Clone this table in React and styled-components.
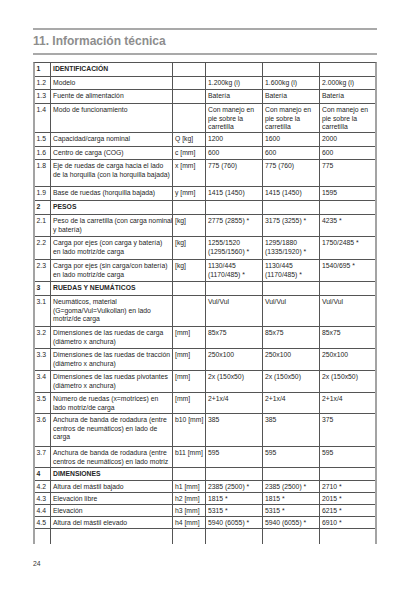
import React from "react";
import styled, { createGlobalStyle } from "styled-components";

const Global = createGlobalStyle`
  html, body { margin: 0; padding: 0; background: #fff; }
  body { font-family: "Liberation Sans", Arial, sans-serif; }
`;

const Page = styled.div`
  padding: 28px 0 0 33px;
  width: 344px;
`;

const Rule = styled.div`
  height: 2px;
  background: #a9a9a9;
  margin-top: ${(p) => p.$mt || 0}px;
`;

const Title = styled.h1`
  margin: 4px 0 0;
  font-size: 12px;
  line-height: 14px;
  font-weight: 700;
  color: #8d8d8d;
`;

const Table = styled.div`
  margin-top: 7px;
  box-sizing: border-box;
  width: 344px;
  border-top: 1px solid #555;
  border-left: 2px solid #a3a3a3;
  border-right: 2px solid #a3a3a3;
`;

const Row = styled.div`
  display: grid;
  grid-template-columns: 16px 122px 33px 57px 57px 55px;
  box-sizing: border-box;
  height: ${(p) => p.$h}px;
  border-bottom: ${(p) => (p.$open ? "none" : "1px solid #555")};
`;

const Cell = styled.div`
  box-sizing: border-box;
  padding: 2px 0 0 ${(p) => (p.$first ? 1.5 : 2)}px;
  border-right: ${(p) => (p.$last ? "none" : "1px solid #555")};
  font-size: 6.8px;
  line-height: 8.5px;
  font-weight: ${(p) => (p.$bold ? 700 : 400)};
  color: #262626;
  white-space: nowrap;
  overflow: hidden;
`;

const PageNumber = styled.div`
  margin-top: 16px;
  font-size: 6.8px;
  line-height: 8px;
  color: #333;
`;

const M = ["Con manejo en", "pie sobre la", "carretilla"];

const rows = [
  { n: "1", l: ["IDENTIFICACIÓN"], bold: true, h: 14 },
  { n: "1.2", l: ["Modelo"], v: ["1.200kg (i)", "1.600kg (i)", "2.000kg (i)"], h: 13 },
  { n: "1.3", l: ["Fuente de alimentación"], v: ["Batería", "Batería", "Batería"], h: 14 },
  { n: "1.4", l: ["Modo de funcionamiento"], v: [M, M, M], h: 29 },
  { n: "1.5", l: ["Capacidad/carga nominal"], u: "Q [kg]", v: ["1200", "1600", "2000"], h: 14 },
  { n: "1.6", l: ["Centro de carga (COG)"], u: "c [mm]", v: ["600", "600", "600"], h: 13 },
  {
    n: "1.8",
    l: ["Eje de ruedas de carga hacia el lado", "de la horquilla (con la horquilla bajada)"],
    u: "x [mm]",
    v: ["775 (760)", "775 (760)", "775"],
    h: 27,
  },
  { n: "1.9", l: ["Base de ruedas (horquilla bajada)"], u: "y [mm]", v: ["1415 (1450)", "1415 (1450)", "1595"], h: 14 },
  { n: "2", l: ["PESOS"], bold: true, h: 14 },
  {
    n: "2.1",
    l: ["Peso de la carretilla (con carga nominal", "y batería)"],
    u: "[kg]",
    v: ["2775 (2855) *", "3175 (3255) *", "4235 *"],
    h: 22,
  },
  {
    n: "2.2",
    l: ["Carga por ejes (con carga y batería)", "en lado motriz/de carga"],
    u: "[kg]",
    v: [["1255/1520", "(1295/1560) *"], ["1295/1880", "(1335/1920) *"], "1750/2485 *"],
    h: 23,
  },
  {
    n: "2.3",
    l: ["Carga por ejes (sin carga/con batería)", "en lado motriz/de carga"],
    u: "[kg]",
    v: [["1130/445", "(1170/485) *"], ["1130/445", "(1170/485) *"], "1540/695 *"],
    h: 22,
  },
  { n: "3", l: ["RUEDAS Y NEUMÁTICOS"], bold: true, h: 14 },
  {
    n: "3.1",
    l: ["Neumáticos, material", "(G=goma/Vul=Vulkollan) en lado", "motriz/de carga"],
    v: ["Vul/Vul", "Vul/Vul", "Vul/Vul"],
    h: 31,
  },
  {
    n: "3.2",
    l: ["Dimensiones de las ruedas de carga", "(diámetro x anchura)"],
    u: "[mm]",
    v: ["85x75", "85x75", "85x75"],
    h: 22,
  },
  {
    n: "3.3",
    l: ["Dimensiones de las ruedas de tracción", "(diámetro x anchura)"],
    u: "[mm]",
    v: ["250x100", "250x100", "250x100"],
    h: 22,
  },
  {
    n: "3.4",
    l: ["Dimensiones de las ruedas pivotantes", "(diámetro x anchura)"],
    u: "[mm]",
    v: ["2x (150x50)", "2x (150x50)", "2x (150x50)"],
    h: 22,
  },
  {
    n: "3.5",
    l: ["Número de ruedas (x=motrices) en", "lado motriz/de carga"],
    u: "[mm]",
    v: ["2+1x/4", "2+1x/4", "2+1x/4"],
    h: 21,
  },
  {
    n: "3.6",
    l: ["Anchura de banda de rodadura (entre", "centros de neumáticos) en lado de", "carga"],
    u: "b10 [mm]",
    v: ["385", "385", "375"],
    h: 33,
  },
  {
    n: "3.7",
    l: ["Anchura de banda de rodadura (entre", "centros de neumáticos) en lado motriz"],
    u: "b11 [mm]",
    v: ["595", "595", "595"],
    h: 21,
  },
  { n: "4", l: ["DIMENSIONES"], bold: true, h: 13 },
  { n: "4.2", l: ["Altura del mástil bajado"], u: "h1 [mm]", v: ["2385 (2500) *", "2385 (2500) *", "2710 *"], h: 12 },
  { n: "4.3", l: ["Elevación libre"], u: "h2 [mm]", v: ["1815 *", "1815 *", "2015 *"], h: 12 },
  { n: "4.4", l: ["Elevación"], u: "h3 [mm]", v: ["5315 *", "5315 *", "6215 *"], h: 12 },
  { n: "4.5", l: ["Altura del mástil elevado"], u: "h4 [mm]", v: ["5940 (6055) *", "5940 (6055) *", "6910 *"], h: 12 },
  { n: "", l: [], h: 15, open: true },
];

const Lines = ({ value }) => {
  const arr = Array.isArray(value) ? value : value ? [value] : [];
  return arr.map((t, i) => (
    <React.Fragment key={i}>
      {i > 0 && <br />}
      {t}
    </React.Fragment>
  ));
};

export default function App() {
  return (
    <>
      <Global />
      <Page>
        <Rule />
        <Title>11. Información técnica</Title>
        <Rule $mt={5} />
        <Table>
          {rows.map((r, i) => (
            <Row key={i} $h={r.h} $open={r.open}>
              <Cell $first $bold={r.bold}>{r.n}</Cell>
              <Cell $bold={r.bold}>
                <Lines value={r.l} />
              </Cell>
              <Cell>{r.u || ""}</Cell>
              {[0, 1, 2].map((k) => (
                <Cell key={k} $last={k === 2}>
                  <Lines value={r.v ? r.v[k] : null} />
                </Cell>
              ))}
            </Row>
          ))}
        </Table>
        <PageNumber>24</PageNumber>
      </Page>
    </>
  );
}
